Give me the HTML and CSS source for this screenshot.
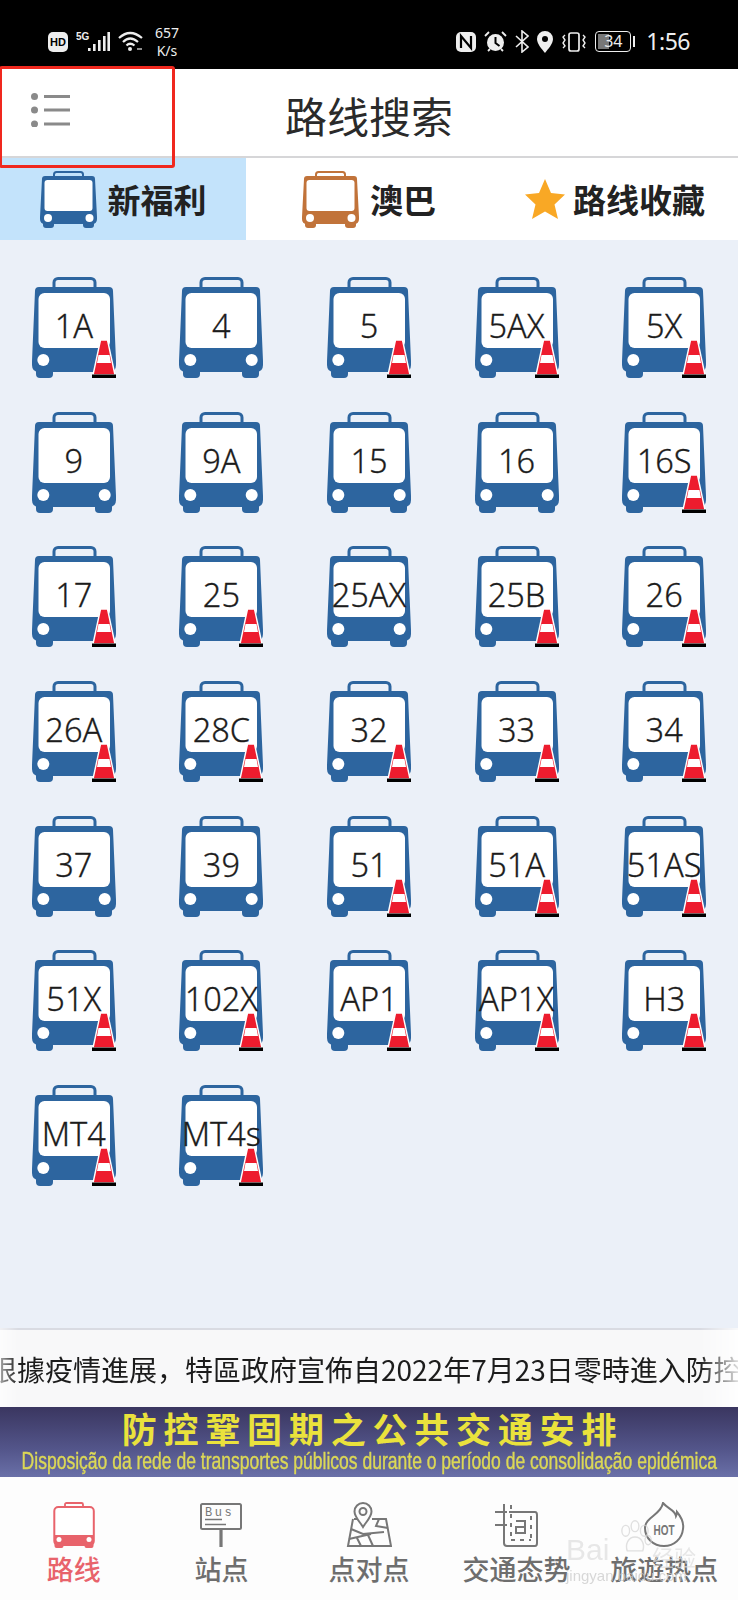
FILE: index.html
```html
<!DOCTYPE html>
<html lang="zh">
<head>
<meta charset="utf-8">
<title>路线搜索</title>
<link rel="stylesheet" href="styles.css">
</head>
<body>
<svg class="defs" width="0" height="0" aria-hidden="true">
  <defs>
    <symbol id="bus" viewBox="0 0 84 101">
      <rect x="22" y="1.5" width="41" height="13" rx="4" fill="none" stroke="currentColor" stroke-width="3"/>
      <rect x="4" y="88" width="17" height="13" rx="4" fill="currentColor"/>
      <rect x="63" y="88" width="17" height="13" rx="4" fill="currentColor"/>
      <path d="M7 10H77Q81 10 81 14L84 84V88Q84 95 77 95H7Q0 95 0 88V84L3 14Q3 10 7 10Z" fill="currentColor"/>
      <rect x="6.5" y="16" width="71.500" height="55" rx="6" fill="#fff"/>
      <circle cx="11.3" cy="83" r="6" fill="#fff"/>
      <circle cx="72.7" cy="83" r="6" fill="#fff"/>
    </symbol>
    <symbol id="cone" viewBox="0 0 24 39">
      <path d="M8.500 1H15.500L23 36H1Z" fill="#ed1c2e" stroke="#fff" stroke-width="1.4" stroke-linejoin="round"/>
      <path d="M6.500 16H17.500L19 24H5Z" fill="#fff"/>
      <rect x="0" y="35.500" width="24" height="3.500" fill="#000"/>
    </symbol>
    <symbol id="tab-bus" viewBox="0 0 57 57">
      <rect x="14" y="1" width="29" height="8" rx="2.5" fill="none" stroke="currentColor" stroke-width="2"/>
      <rect x="3" y="48" width="11" height="9" rx="3" fill="currentColor"/>
      <rect x="43" y="48" width="11" height="9" rx="3" fill="currentColor"/>
      <path d="M5 5H52Q55 5 55 8L57 46V48Q57 53 52 53H5Q0 53 0 48V46L2 8Q2 5 5 5Z" fill="currentColor"/>
      <rect x="4.5" y="9" width="48" height="31" rx="3" fill="#fff"/>
      <circle cx="8" cy="47" r="4" fill="#fff"/>
      <circle cx="49.5" cy="47" r="4" fill="#fff"/>
    </symbol>
  </defs>
</svg>

<div class="screen">
  <div class="status">
    <div class="status-group">
      <span class="hd">HD</span>
      <svg class="signal" width="34" height="22" viewBox="0 0 34 22">
        <text x="0" y="9" class="five-g">5G</text>
        <rect x="12" y="17" width="2.6" height="3" fill="#eee"/>
        <rect x="17" y="13" width="2.6" height="7" fill="#eee"/>
        <rect x="22" y="9" width="2.6" height="11" fill="#eee"/>
        <rect x="27" y="5" width="2.6" height="15" fill="#eee"/>
        <rect x="31.4" y="1" width="2.6" height="19" fill="#eee"/>
      </svg>
      <svg class="wifi" width="25" height="22" viewBox="0 0 25 22" fill="none" stroke="#eee" stroke-width="2.2">
        <path d="M1 7Q12 -3 24 7"/>
        <path d="M5 11Q12 4 20 11"/>
        <path d="M8.5 14.5Q12 11 16.5 14.5"/>
        <circle cx="12" cy="18" r="2" fill="#eee" stroke="none"/>
        <path d="M19 18h5" stroke-width="1.2"/>
      </svg>
      <div class="speed">657<br>K/s</div>
    </div>
    <div class="status-group status-right">
      <svg width="20" height="20" viewBox="0 0 20 20">
        <rect width="20" height="20" rx="5" fill="#eee"/>
        <path d="M5 16V4L15 16V4" fill="none" stroke="#000" stroke-width="2.2"/>
      </svg>
      <svg width="23" height="21" viewBox="0 0 23 21">
        <circle cx="11.5" cy="11.5" r="8.5" fill="#eee"/>
        <path d="M11.5 6v6l4 3" fill="none" stroke="#000" stroke-width="2"/>
        <path d="M1 5L5 1M22 5L18 1M4 20l2-2M19 20l-2-2" stroke="#eee" stroke-width="1.8"/>
      </svg>
      <svg width="14" height="23" viewBox="0 0 14 23" fill="none" stroke="#eee" stroke-width="1.6">
        <path d="M1 6L13 17L7 22V1L13 6L1 17"/>
      </svg>
      <svg width="16" height="22" viewBox="0 0 16 22">
        <path d="M8 0A8 8 0 0 1 16 8C16 13 11 18 8 22C5 18 0 13 0 8A8 8 0 0 1 8 0Z" fill="#eee"/>
        <circle cx="8" cy="8" r="3" fill="#000"/>
      </svg>
      <svg width="26" height="20" viewBox="0 0 26 20" fill="none" stroke="#eee" stroke-width="1.7">
        <rect x="8" y="1" width="10" height="18" rx="2"/>
        <path d="M4 3l-2 2 2 3-2 3 2 3-2 2M22 3l2 2-2 3 2 3-2 3 2 2" stroke-width="1.4"/>
      </svg>
      <div class="battery">
        <div class="battery-case"><span class="battery-level"></span><span class="battery-num">34</span></div>
        <span class="battery-cap"></span>
      </div>
      <span class="clock">1:56</span>
    </div>
  </div>

  <header class="title-bar">
    <svg class="menu-icon" width="40" height="34" viewBox="0 0 40 34">
      <circle cx="3.5" cy="3.5" r="3.5" fill="#8a8a8a"/>
      <circle cx="3.5" cy="17" r="3.5" fill="#8a8a8a"/>
      <circle cx="3.5" cy="31" r="3.5" fill="#8a8a8a"/>
      <path d="M13 3.5H39M13 17H39M13 31H39" stroke="#8a8a8a" stroke-width="3"/>
    </svg>
    <h1 class="title">路线搜索</h1>
  </header>

  <nav class="tabs">
    <div class="tab tab-active">
      <svg class="tab-icon icon-blue"><use href="#tab-bus"/></svg>
      <span>新福利</span>
    </div>
    <div class="tab">
      <svg class="tab-icon icon-orange"><use href="#tab-bus"/></svg>
      <span>澳巴</span>
    </div>
    <div class="tab">
      <svg class="star" viewBox="0 0 40 40"><path d="M20 0L26 14L40 15.500L29.500 25.500L33 40L20 32.500L7 40L10.500 25.500L0 15.500L14 14Z" fill="#f9a825"/></svg>
      <span>路线收藏</span>
    </div>
  </nav>

  <main class="routes">
    <div class="route"><svg class="bus"><use href="#bus"/></svg><span class="num">1A</span><svg class="cone"><use href="#cone"/></svg></div>
    <div class="route"><svg class="bus"><use href="#bus"/></svg><span class="num">4</span></div>
    <div class="route"><svg class="bus"><use href="#bus"/></svg><span class="num">5</span><svg class="cone"><use href="#cone"/></svg></div>
    <div class="route"><svg class="bus"><use href="#bus"/></svg><span class="num">5AX</span><svg class="cone"><use href="#cone"/></svg></div>
    <div class="route"><svg class="bus"><use href="#bus"/></svg><span class="num">5X</span><svg class="cone"><use href="#cone"/></svg></div>

    <div class="route"><svg class="bus"><use href="#bus"/></svg><span class="num">9</span></div>
    <div class="route"><svg class="bus"><use href="#bus"/></svg><span class="num">9A</span></div>
    <div class="route"><svg class="bus"><use href="#bus"/></svg><span class="num">15</span></div>
    <div class="route"><svg class="bus"><use href="#bus"/></svg><span class="num">16</span></div>
    <div class="route"><svg class="bus"><use href="#bus"/></svg><span class="num">16S</span><svg class="cone"><use href="#cone"/></svg></div>

    <div class="route"><svg class="bus"><use href="#bus"/></svg><span class="num">17</span><svg class="cone"><use href="#cone"/></svg></div>
    <div class="route"><svg class="bus"><use href="#bus"/></svg><span class="num">25</span><svg class="cone"><use href="#cone"/></svg></div>
    <div class="route"><svg class="bus"><use href="#bus"/></svg><span class="num">25AX</span></div>
    <div class="route"><svg class="bus"><use href="#bus"/></svg><span class="num">25B</span><svg class="cone"><use href="#cone"/></svg></div>
    <div class="route"><svg class="bus"><use href="#bus"/></svg><span class="num">26</span><svg class="cone"><use href="#cone"/></svg></div>

    <div class="route"><svg class="bus"><use href="#bus"/></svg><span class="num">26A</span><svg class="cone"><use href="#cone"/></svg></div>
    <div class="route"><svg class="bus"><use href="#bus"/></svg><span class="num">28C</span><svg class="cone"><use href="#cone"/></svg></div>
    <div class="route"><svg class="bus"><use href="#bus"/></svg><span class="num">32</span><svg class="cone"><use href="#cone"/></svg></div>
    <div class="route"><svg class="bus"><use href="#bus"/></svg><span class="num">33</span><svg class="cone"><use href="#cone"/></svg></div>
    <div class="route"><svg class="bus"><use href="#bus"/></svg><span class="num">34</span><svg class="cone"><use href="#cone"/></svg></div>

    <div class="route"><svg class="bus"><use href="#bus"/></svg><span class="num">37</span></div>
    <div class="route"><svg class="bus"><use href="#bus"/></svg><span class="num">39</span></div>
    <div class="route"><svg class="bus"><use href="#bus"/></svg><span class="num">51</span><svg class="cone"><use href="#cone"/></svg></div>
    <div class="route"><svg class="bus"><use href="#bus"/></svg><span class="num">51A</span><svg class="cone"><use href="#cone"/></svg></div>
    <div class="route"><svg class="bus"><use href="#bus"/></svg><span class="num">51AS</span><svg class="cone"><use href="#cone"/></svg></div>

    <div class="route"><svg class="bus"><use href="#bus"/></svg><span class="num">51X</span><svg class="cone"><use href="#cone"/></svg></div>
    <div class="route"><svg class="bus"><use href="#bus"/></svg><span class="num">102X</span><svg class="cone"><use href="#cone"/></svg></div>
    <div class="route"><svg class="bus"><use href="#bus"/></svg><span class="num">AP1</span><svg class="cone"><use href="#cone"/></svg></div>
    <div class="route"><svg class="bus"><use href="#bus"/></svg><span class="num">AP1X</span><svg class="cone"><use href="#cone"/></svg></div>
    <div class="route"><svg class="bus"><use href="#bus"/></svg><span class="num">H3</span><svg class="cone"><use href="#cone"/></svg></div>

    <div class="route"><svg class="bus"><use href="#bus"/></svg><span class="num">MT4</span><svg class="cone"><use href="#cone"/></svg></div>
    <div class="route"><svg class="bus"><use href="#bus"/></svg><span class="num">MT4s</span><svg class="cone"><use href="#cone"/></svg></div>
  </main>

  <div class="ticker"><p class="ticker-text">根據疫情進展，特區政府宣佈自2022年7月23日零時進入防控</p></div>

  <div class="banner">
    <div class="banner-title">防控鞏固期之公共交通安排</div>
    <div class="banner-sub">Disposição da rede de transportes públicos durante o período de consolidação epidémica</div>
  </div>

  <footer class="bottom-nav">
    <div class="nav-item nav-active">
      <svg class="nav-icon" viewBox="0 0 46 46">
        <rect x="14" y="1" width="18" height="5" rx="1.500" fill="none" stroke="#e8636b" stroke-width="1.800"/>
        <rect x="3.500" y="40" width="9" height="6" rx="2" fill="#e8636b"/>
        <rect x="33.500" y="40" width="9" height="6" rx="2" fill="#e8636b"/>
        <rect x="3.300" y="5" width="39.500" height="38" rx="4" fill="#fff" stroke="#e8636b" stroke-width="2"/>
        <path d="M3 33H43V39Q43 43 39 43H7Q3 43 3 39Z" fill="#e8636b"/>
        <circle cx="8" cy="37.500" r="2.500" fill="#fff"/>
        <circle cx="38" cy="37.500" r="2.500" fill="#fff"/>
      </svg>
      <span>路线</span>
    </div>
    <div class="nav-item">
      <svg class="nav-icon" viewBox="0 0 46 46" fill="none" stroke="#777" stroke-width="2">
        <rect x="3" y="2" width="40" height="25" rx="1.500"/>
        <text x="7" y="14" class="sign-text">Bus</text>
        <path d="M7 17.500H24M7 22.500H28" stroke-width="1.500"/>
        <path d="M23 27V45" stroke-width="3.200"/>
      </svg>
      <span>站点</span>
    </div>
    <div class="nav-item">
      <svg class="nav-icon" viewBox="0 0 46 46" fill="none" stroke="#777" stroke-width="2">
        <path d="M8 17H12M26 17H40L45 44H2L7 17"/>
        <path d="M17 1A8.500 8.500 0 0 1 25.500 9.500C25.500 15 20 20 17 25C14 20 8.500 15 8.500 9.500A8.500 8.500 0 0 1 17 1Z"/>
        <circle cx="17" cy="9.500" r="3.500"/>
        <path d="M5 27L17 32L38 30M3 37L25 32M22 33L27 44M33 17L30 24L42 26M11 36L15 44"/>
      </svg>
      <span>点对点</span>
    </div>
    <div class="nav-item">
      <svg class="nav-icon" viewBox="0 0 46 46" fill="none" stroke="#777" stroke-width="2">
        <path d="M1 10H13M1 23H13M10 2V41Q10 44 13 44H41Q43 44 43 41V13Q43 10 41 10H15"/>
        <path d="M17 3V38M37 14V38M17 38H37" stroke-dasharray="4 5"/>
        <path d="M22 19H31V31H22V25H31"/>
      </svg>
      <span>交通态势</span>
    </div>
    <div class="nav-item">
      <svg class="nav-icon" viewBox="0 0 46 46" fill="none" stroke="#777" stroke-width="2">
        <path d="M22 1C27 7 34 8 35 14C36 12 36 11 36 10C41 16 43 21 42 27C41 37 33 44 23 44C12 44 4 36 4 26C4 15 20 13 22 1Z"/>
        <text x="23" y="33" class="hot-text" textLength="21" lengthAdjust="spacingAndGlyphs">HOT</text>
      </svg>
      <span>旅遊热点</span>
    </div>
  </footer>

  <div class="highlight"></div>
  <div class="watermark">
    <svg class="paw" width="46" height="34" viewBox="0 0 46 44" fill="none" stroke="#d4d4d4" stroke-width="1.800">
      <ellipse cx="11" cy="14" rx="5" ry="7"/>
      <ellipse cx="23" cy="8" rx="5" ry="7"/>
      <ellipse cx="35" cy="14" rx="5" ry="7"/>
      <ellipse cx="40" cy="26" rx="4" ry="6"/>
      <path d="M23 22C14 22 10 32 13 40H33C36 32 32 22 23 22Z"/>
    </svg>
    <div class="wm-brand">Bai</div>
    <div class="wm-cn">经验</div>
    <div class="wm-url">jingyan.baidu.com</div>
  </div>
</div>
</body>
</html>
```

FILE: styles.css
```css
* {
  box-sizing: border-box;
}

html,
body {
  margin: 0;
  padding: 0;
}

body {
  font-family: "Noto Sans CJK SC", "Noto Sans", sans-serif;
  color: #222;
}

.defs {
  position: absolute;
}

.screen {
  position: relative;
  width: 738px;
  height: 1600px;
  display: flex;
  flex-direction: column;
  overflow: hidden;
  background: #fff;
}

/* status bar */
.status {
  height: 69px;
  flex: none;
  background: #000;
  display: flex;
  justify-content: space-between;
  align-items: center;
  padding: 14px 48px 0;
  color: #eee;
}

.status-group {
  display: flex;
  align-items: center;
  gap: 8px;
}

.status-right {
  gap: 8px;
}

.hd {
  width: 20px;
  height: 20px;
  border-radius: 5px;
  background: #eee;
  color: #000;
  font: 700 11px/20px "Liberation Sans", sans-serif;
  text-align: center;
}

.five-g {
  font: 700 10px "Liberation Sans", sans-serif;
  fill: #eee;
}

.speed {
  font: 400 14px/18px "Noto Sans", sans-serif;
  text-align: center;
  margin-left: 2px;
  width: 28px;
}

.battery {
  display: flex;
  align-items: center;
  gap: 2px;
}

.battery-case {
  position: relative;
  width: 36px;
  height: 21px;
  border: 1.500px solid #eee;
  border-radius: 4px;
  overflow: hidden;
}

.battery-level {
  position: absolute;
  left: 2px;
  top: 2px;
  bottom: 2px;
  width: 11px;
  background: #777;
}

.battery-num {
  position: absolute;
  inset: 0;
  text-align: center;
  font: 400 16px/18px "Noto Sans", sans-serif;
}

.battery-cap {
  width: 2px;
  height: 11px;
  background: #eee;
}

.clock {
  font: 400 23px/1 "Noto Sans", sans-serif;
  letter-spacing: -.5px;
  margin-left: 3px;
}

/* title bar */
.title-bar {
  height: 89px;
  flex: none;
  display: flex;
  align-items: center;
  justify-content: center;
  position: relative;
  border-bottom: 2px solid #d6d6d8;
}

.menu-icon {
  position: absolute;
  left: 31px;
  top: 24px;
}

.title {
  margin: 0;
  font-size: 42px;
  font-weight: 400;
  line-height: 1;
  color: #2a2a2a;
  transform: translateY(2px);
}

/* operator tabs */
.tabs {
  height: 82px;
  flex: none;
  display: grid;
  grid-template-columns: repeat(3, 1fr);
}

.tab {
  display: flex;
  align-items: center;
  justify-content: center;
  gap: 11px;
  font-size: 33px;
  font-weight: 700;
  color: #222;
}

.tab-active {
  background: #c3e3fb;
}

.tab-icon {
  width: 57px;
  height: 57px;
}

.icon-blue {
  color: #2d659f;
}

.icon-orange {
  color: #c1733a;
}

.star {
  width: 40px;
  height: 40px;
  margin-right: -3px;
}

/* route grid */
.routes {
  flex: 1;
  min-height: 0;
  background: #ebf0f8;
  padding-top: 37px;
  display: grid;
  grid-template-columns: repeat(5, 147.6px);
  grid-auto-rows: 134.7px;
  justify-items: center;
  align-items: start;
  align-content: start;
}

.route {
  position: relative;
  width: 84px;
  height: 101px;
}

.bus {
  display: block;
  width: 84px;
  height: 101px;
  color: #2d659f;
}

.num {
  position: absolute;
  inset: 0 0 4px;
  display: flex;
  align-items: center;
  justify-content: center;
  white-space: nowrap;
  font-family: "Noto Sans", sans-serif;
  font-weight: 300;
  font-size: 32.500px;
  color: #1c1c1c;
  -webkit-text-stroke: .3px #1c1c1c;
}

.cone {
  position: absolute;
  right: 0;
  bottom: 0;
  width: 24px;
  height: 39px;
}

/* scrolling notice */
.ticker {
  height: 79px;
  flex: none;
  border-top: 2px solid #d9dbe2;
  background: #f8f8f9;
  display: flex;
  align-items: center;
  overflow: hidden;
  -webkit-mask-image: linear-gradient(90deg, rgba(0, 0, 0, .4) 0, #000 18px, #000 700px, rgba(0, 0, 0, .15) 738px);
  mask-image: linear-gradient(90deg, rgba(0, 0, 0, .4) 0, #000 18px, #000 700px, rgba(0, 0, 0, .15) 738px);
}

.ticker-text {
  margin: 0 0 0 -11px;
  white-space: nowrap;
  font-family: "Noto Sans CJK TC", "Noto Sans", sans-serif;
  font-size: 28px;
  line-height: 1;
  color: #1c1c1c;
}

/* notice banner */
.banner {
  height: 70px;
  flex: none;
  background: linear-gradient(180deg, #3a3660 0%, #53558a 60%, #6a70a8 100%);
  display: flex;
  flex-direction: column;
  align-items: center;
  overflow: hidden;
}

.banner-title {
  height: 42px;
  font-size: 35px;
  line-height: 42px;
  font-weight: 700;
  letter-spacing: 6.800px;
  margin-right: -7px;
  color: #eae23c;
  white-space: nowrap;
}

.banner-sub {
  width: max-content;
  font-family: "Liberation Sans", sans-serif;
  font-size: 24px;
  line-height: 24px;
  color: #dcd856;
  white-space: nowrap;
  -webkit-text-stroke: .4px #dcd856;
  transform: scaleX(.73);
}

/* bottom navigation */
.bottom-nav {
  height: 123px;
  flex: none;
  display: grid;
  grid-template-columns: repeat(5, 147.6px);
  justify-items: center;
  padding-top: 25px;
  background: #fdfdfd;
}

.nav-item {
  display: flex;
  flex-direction: column;
  align-items: center;
  gap: 5px;
  font-size: 27px;
  line-height: 32px;
  font-weight: 500;
  color: #6e6e6e;
  white-space: nowrap;
}

.nav-active {
  color: #e8636b;
}

.nav-icon {
  width: 46px;
  height: 46px;
}

.sign-text {
  font: 400 12px "Liberation Mono", monospace;
  letter-spacing: 2.500px;
  fill: #777;
  stroke: none;
}

.hot-text {
  font: 700 15px "Liberation Sans", sans-serif;
  text-anchor: middle;
  fill: #777;
  stroke: none;
}

/* red marker round the menu button */
.highlight {
  position: absolute;
  left: -1px;
  top: 66px;
  width: 176px;
  height: 102px;
  border: 3px solid #f0281e;
  border-radius: 3px;
}

/* site mark over the bottom corner */
.watermark {
  position: absolute;
  left: 566px;
  top: 1518px;
  width: 132px;
  height: 66px;
  opacity: .7;
  pointer-events: none;
}

.paw {
  position: absolute;
  left: 46px;
  top: 2px;
}

.wm-brand {
  position: absolute;
  left: 0;
  top: 14px;
  font: 400 30px/36px "Liberation Sans", sans-serif;
  color: #dedede;
  white-space: nowrap;
}

.wm-cn {
  position: absolute;
  left: 86px;
  top: 24px;
  font-size: 22px;
  line-height: 28px;
  color: #dedede;
  white-space: nowrap;
}

.wm-url {
  position: absolute;
  left: 0;
  top: 49px;
  font: 400 15px/18px "Liberation Sans", sans-serif;
  color: #c8c8c8;
  white-space: nowrap;
}
```
